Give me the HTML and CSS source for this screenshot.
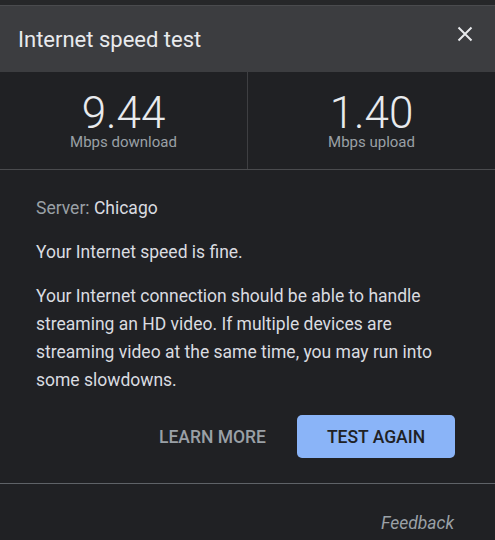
FILE: index.html
```html
<!DOCTYPE html>
<html lang="en">
<head>
  <meta charset="UTF-8">
  <title>Internet speed test</title>
  <link rel="stylesheet" href="styles.css">
</head>
<body>
  <div class="dialog">
    <div class="header">
      <h2>Internet speed test</h2>
      <button class="close" aria-label="Close">
        <svg width="16" height="16" viewBox="0 0 16 16">
          <path d="M1.5 1.5 L14.5 14.5 M14.5 1.5 L1.5 14.5" stroke="#e8eaed" stroke-width="2" fill="none"/>
        </svg>
      </button>
    </div>

    <div class="stats">
      <div class="stat">
        <div class="value">9.44</div>
        <div class="unit">Mbps download</div>
      </div>
      <div class="stat">
        <div class="value">1.40</div>
        <div class="unit">Mbps upload</div>
      </div>
    </div>

    <div class="content">
      <p class="server"><span class="label">Server:</span> Chicago</p>
      <p>Your Internet speed is fine.</p>
      <p class="desc">Your Internet connection should be able to handle streaming an HD video. If multiple devices are streaming video at the same time, you may run into some slowdowns.</p>
      <div class="actions">
        <button class="text-btn">LEARN MORE</button>
        <button class="primary-btn">TEST AGAIN</button>
      </div>
    </div>

    <div class="footer">
      <a href="#">Feedback</a>
    </div>
  </div>
</body>
</html>
```

FILE: styles.css
```css
body {
  margin: 0;
  background: #202124;
  font-family: Roboto, "Liberation Sans", sans-serif;
  color: #e8eaed;
}
.dialog {
  width: 495px;
  height: 540px;
  border-top: 5px solid #262729;
  box-sizing: border-box;
  overflow: hidden;
}
.header {
  height: 67px;
  background: #3c3d40;
  border-top: 1px solid #4a4b4e;
  box-sizing: border-box;
  display: flex;
  align-items: center;
  justify-content: space-between;
  padding: 0 22px 0 18px;
}
.header h2 {
  margin: 0;
  font-size: 22px;
  font-weight: 400;
  color: #e8eaed;
}
.close {
  background: none;
  border: none;
  padding: 0;
  margin-bottom: 10px;
  cursor: pointer;
  display: flex;
}
.stats {
  display: flex;
  height: 97px;
  border-bottom: 1px solid #4a4b4e;
}
.stat {
  flex: 1;
  display: flex;
  flex-direction: column;
  align-items: center;
  padding-top: 21px;
}
.stat + .stat {
  border-left: 1px solid #3e3f42;
}
.value {
  font-size: 44px;
  font-weight: 300;
  line-height: 40px;
  color: #e8eaed;
}
.unit {
  font-size: 15px;
  line-height: 18px;
  color: #9aa0a6;
}
.content {
  padding: 24px 60px 25px 36px;
  border-bottom: 1px solid #5f6368;
}
.content p {
  margin: 0 0 16px;
  font-size: 17.5px;
  line-height: 28px;
  color: #dadce0;
}
.server .label {
  color: #9aa0a6;
}
.desc {
  margin-bottom: 0;
}
.actions {
  display: flex;
  justify-content: flex-end;
  align-items: center;
  gap: 16px;
  margin-top: 21px;
  margin-right: -20px;
}
.actions button {
  font-family: inherit;
  font-size: 17.5px;
  font-weight: 500;
  height: 43px;
  border-radius: 5px;
  cursor: pointer;
}
.text-btn {
  background: none;
  border: none;
  color: #9aa0a6;
  padding: 0 15px;
}
.primary-btn {
  background: #8ab4f8;
  border: none;
  color: #202124;
  width: 158px;
}
.footer {
  text-align: right;
  padding: 29px 41px 20px;
}
.footer a {
  color: #9aa0a6;
  font-style: italic;
  font-size: 17.5px;
  text-decoration: none;
}
```
